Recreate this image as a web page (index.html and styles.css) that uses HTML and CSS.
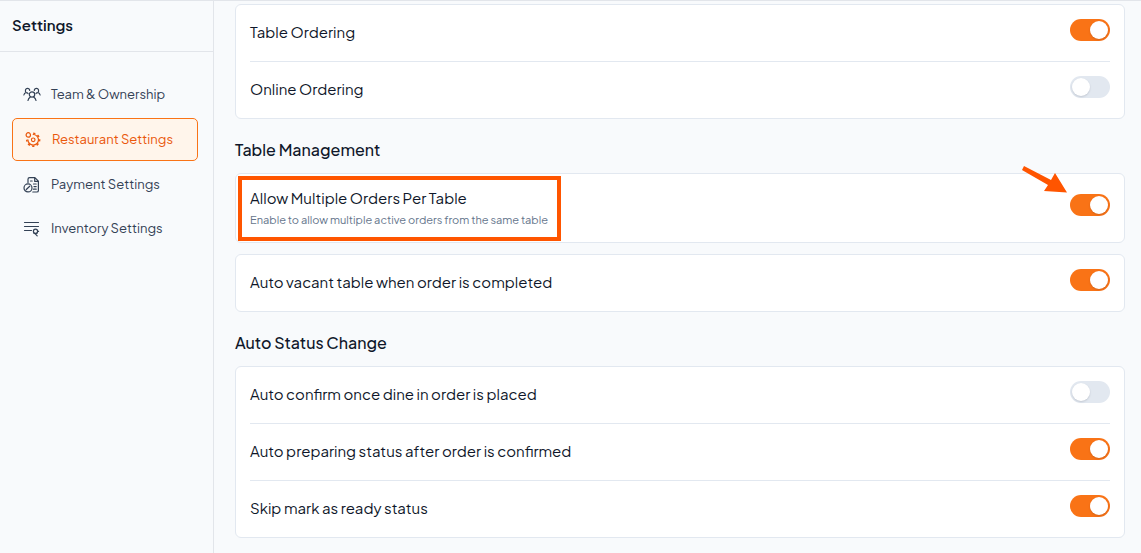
FILE: index.html
```html
<!DOCTYPE html>
<html lang="en">
<head>
<meta charset="utf-8">
<meta name="viewport" content="width=device-width, initial-scale=1">
<title>Restaurant Settings</title>
<link rel="stylesheet" href="styles.css">
</head>
<body>
<div class="app">
  <aside class="sidebar">
    <h1 class="sidebar-title">Settings</h1>
    <nav class="nav">
      <a class="nav-item" href="#team">
        <svg class="icon" viewBox="0 0 18 18" aria-hidden="true">
          <circle cx="9" cy="8.500" r="2.700"/>
          <path d="M5 14.500c.3-1.800 1.200-2.600 2.300-3.400M13 14.500c-.3-1.800-1.200-2.600-2.300-3.400M3 6.600C1.700 4.500 2.600 2.400 4.400 2.400c1.200 0 2.200.8 2.300 2M15 6.600c1.300-2.100.4-4.200-1.400-4.200-1.200 0-2.200.8-2.300 2M.9 9c.3-1.500 1.100-2.400 2.100-2.400 1 0 1.600.2 2 .9M17.100 9c-.3-1.500-1.100-2.400-2.100-2.400-1 0-1.600.2-2 .9"/>
        </svg>
        <span class="nav-label">Team &amp; Ownership</span>
      </a>
      <a class="nav-item nav-item-active" href="#restaurant" aria-current="page">
        <svg class="icon" viewBox="0 0 18 18" aria-hidden="true">
          <circle cx="4.300" cy="3.900" r="2.200"/>
          <circle cx="9.200" cy="8.800" r="1.800"/>
          <path d="M9.200 3.500A5.300 5.300 0 1 1 3.900 8.800"/>
          <path class="gear-teeth" d="M9.200 2.400A6.400 6.400 0 1 1 2.800 8.800"/>
        </svg>
        <span class="nav-label">Restaurant Settings</span>
      </a>
      <a class="nav-item" href="#payment">
        <svg class="icon" viewBox="0 0 18 18" aria-hidden="true">
          <path d="M5 6.500V3.200c0-1 .6-1.600 1.600-1.600h5.300l3.500 3.600v9.200c0 1-.6 1.600-1.600 1.600H9.800M11.700 1.800v3.600h3.500M7.500 5h1.700M10.500 8h2.700M11 10.600h2.200M10.500 13.200h2.700"/>
          <circle cx="5" cy="11.900" r="4"/>
          <path d="M3.300 13.500l3.400-3.300"/>
        </svg>
        <span class="nav-label">Payment Settings</span>
      </a>
      <a class="nav-item" href="#inventory">
        <svg class="icon" viewBox="0 0 18 18" aria-hidden="true">
          <path d="M1.500 2.500h14M1.500 6.500h14M1.500 10.500h7"/>
          <circle cx="12.500" cy="11.300" r="2.100"/>
          <path d="M10.700 13l1.800 1.100 1.700-1.100M12.500 14.100l1.700 1.700M14.600 11.300h1"/>
        </svg>
        <span class="nav-label">Inventory Settings</span>
      </a>
    </nav>
  </aside>

  <main class="content">
    <section class="card">
      <div class="row">
        <label class="row-label" for="table-ordering">Table Ordering</label>
        <input class="toggle" type="checkbox" role="switch" id="table-ordering" checked>
      </div>
      <div class="row">
        <label class="row-label" for="online-ordering">Online Ordering</label>
        <input class="toggle" type="checkbox" role="switch" id="online-ordering">
      </div>
    </section>

    <section class="group">
      <h2 class="group-title">Table Management</h2>
      <div class="card card-annotated">
        <div class="row row-tall">
          <div class="row-text">
            <label class="row-label" for="multiple-orders">Allow Multiple Orders Per Table</label>
            <p class="row-hint" id="multiple-orders-hint">Enable to allow multiple active orders from the same table</p>
          </div>
          <input class="toggle" type="checkbox" role="switch" id="multiple-orders" aria-describedby="multiple-orders-hint" checked>
        </div>
        <div class="highlight"></div>
        <svg class="arrow" viewBox="0 0 46 28" aria-hidden="true">
          <path d="M2 0L0 4l26 15-4 6 23 1.500L33 7l-4 7z"/>
        </svg>
      </div>
      <div class="card">
        <div class="row">
          <label class="row-label" for="auto-vacant">Auto vacant table when order is completed</label>
          <input class="toggle" type="checkbox" role="switch" id="auto-vacant" checked>
        </div>
      </div>
    </section>

    <section class="group">
      <h2 class="group-title">Auto Status Change</h2>
      <div class="card">
        <div class="row">
          <label class="row-label" for="auto-confirm">Auto confirm once dine in order is placed</label>
          <input class="toggle" type="checkbox" role="switch" id="auto-confirm">
        </div>
        <div class="row">
          <label class="row-label" for="auto-preparing">Auto preparing status after order is confirmed</label>
          <input class="toggle" type="checkbox" role="switch" id="auto-preparing" checked>
        </div>
        <div class="row">
          <label class="row-label" for="skip-ready">Skip mark as ready status</label>
          <input class="toggle" type="checkbox" role="switch" id="skip-ready" checked>
        </div>
      </div>
    </section>
  </main>
</div>
</body>
</html>
```
FILE: styles.css
```css
* {
  box-sizing: border-box;
}

body {
  margin: 0;
  background: #f8fafc;
  color: #0f172a;
  font-family: "Plus Jakarta Sans", Inter, "Liberation Sans", sans-serif;
  font-size: 15px;
  line-height: 20px;
}

.app {
  display: flex;
  min-height: 100vh;
  border-top: 1px solid #e2e5ea;
}

.sidebar {
  flex: 0 0 214px;
  border-right: 1px solid #e2e5ea;
}

.sidebar-title {
  margin: 0;
  padding: 14px 12px 16px;
  border-bottom: 1px solid #e2e5ea;
  font-size: 15px;
  font-weight: 600;
  line-height: 20px;
}

.nav {
  display: flex;
  flex-direction: column;
  gap: 3px;
  padding: 22px 15px 22px 12px;
}

.nav-item {
  display: flex;
  align-items: center;
  gap: 10px;
  min-height: 41px;
  padding: 9px 11px;
  border-radius: 5px;
  color: #334155;
  font-size: 13px;
  text-decoration: none;
  white-space: nowrap;
}

.nav-item-active {
  min-height: 43px;
  border: 1px solid #f97316;
  background: #fff5eb;
  color: #ea580c;
}

.nav-label {
  padding-bottom: 2px;
}

.icon {
  flex: none;
  width: 18px;
  height: 18px;
  fill: none;
  stroke: currentColor;
  stroke-width: 1.2;
  stroke-linecap: round;
  stroke-linejoin: round;
}

.gear-teeth {
  stroke-width: 1.6;
  stroke-linecap: butt;
  stroke-dasharray: 2.2 2.4;
}

.content {
  flex: 1;
  min-width: 0;
  padding: 3px 16px 15px 21px;
}

.card {
  border: 1px solid #e2e8f0;
  border-radius: 6px;
  background: #fff;
}

.card-annotated {
  position: relative;
}

.group {
  display: flex;
  flex-direction: column;
  gap: 11px;
  margin-top: 19px;
}

.group-title {
  margin: 0;
  font-size: 16px;
  font-weight: 500;
  line-height: 24px;
}

.row {
  display: flex;
  align-items: center;
  justify-content: space-between;
  min-height: 56px;
  margin: 0 14px;
}

.row + .row {
  min-height: 57px;
  border-top: 1px solid #e2e8f0;
}

.row > .row-label {
  padding-bottom: 2px;
}

.row-tall {
  min-height: 68px;
}

.row-text {
  padding-top: 2px;
}

.row-hint {
  margin: 2px 0 0;
  color: #64748b;
  font-size: 11px;
  line-height: 20px;
}

.toggle {
  appearance: none;
  flex: none;
  display: flex;
  width: 40px;
  height: 22px;
  margin: 0 0 6px;
  padding: 2px;
  border-radius: 11px;
  background: #e2e8f0;
  cursor: pointer;
}

.toggle::before {
  content: "";
  width: 18px;
  height: 18px;
  border-radius: 50%;
  background: #fff;
  box-shadow: 0 1px 2px rgba(15, 23, 42, 0.15);
}

.toggle:checked {
  justify-content: flex-end;
  background: #f97316;
}

.highlight {
  position: absolute;
  top: 2px;
  left: 2px;
  width: 323px;
  height: 65px;
  border: 4px solid #ff5500;
  pointer-events: none;
}

.arrow {
  position: absolute;
  top: -8px;
  right: 56px;
  width: 46px;
  height: 28px;
  fill: #ff5500;
  pointer-events: none;
}
```
